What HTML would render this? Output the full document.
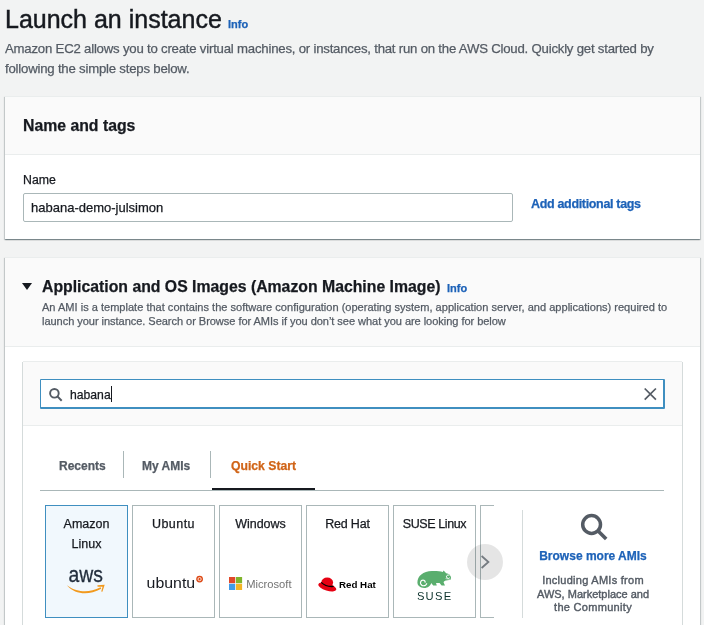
<!DOCTYPE html>
<html><head><meta charset="utf-8">
<style>
html,body{margin:0;padding:0;}
body{width:704px;height:625px;overflow:hidden;background:#f2f3f3;position:relative;font-family:"Liberation Sans",sans-serif;color:#16191f;}
.a{position:absolute;white-space:nowrap;}
svg.a{will-change:transform;}
.t{position:absolute;white-space:nowrap;line-height:20px;will-change:transform;-webkit-text-stroke:0.25px currentColor;}
.panel{position:absolute;left:5px;width:695px;background:#fff;box-shadow:0 1px 1px 0 rgba(0,28,36,.3),1px 1px 1px 0 rgba(0,28,36,.15),-1px 1px 1px 0 rgba(0,28,36,.15);border-top:1px solid #eaeded;}
.ph{position:absolute;left:0;right:0;top:0;background:#fafafa;border-bottom:1px solid #eaeded;}
.link{color:#1d62b8;font-weight:bold;}
.tile{position:absolute;top:505px;width:81px;height:111px;border:1px solid #aab7b8;background:#fff;}
.lbl{position:absolute;will-change:transform;left:0;right:0;text-align:center;font-size:12.5px;line-height:20px;color:#16191f;-webkit-text-stroke:0.25px currentColor;}
</style></head>
<body>
<!-- Title -->
<div class="t" style="left:5px;top:4.2px;font-size:25px;line-height:30px;-webkit-text-stroke:0.45px currentColor;">Launch an instance</div>
<div class="t link" style="left:228px;top:16px;font-size:11px;line-height:16px;">Info</div>
<div class="t" style="left:5px;top:39px;font-size:13.2px;letter-spacing:-0.21px;color:#545b64;">Amazon EC2 allows you to create virtual machines, or instances, that run on the AWS Cloud. Quickly get started by</div>
<div class="t" style="left:5px;top:59px;font-size:13.2px;letter-spacing:-0.21px;color:#545b64;">following the simple steps below.</div>

<!-- Panel 1 -->
<div class="panel" style="top:96px;height:142px;">
  <div class="ph" style="height:57px;"></div>
</div>
<div class="t" style="left:23px;top:116px;font-size:15.8px;font-weight:bold;">Name and tags</div>
<div class="t" style="left:23px;top:170px;font-size:12.3px;">Name</div>
<div class="a" style="left:23px;top:193px;width:488px;height:27px;border:1px solid #aab7b8;border-radius:2px;background:#fff;"></div>
<div class="t" style="left:31px;top:198px;font-size:13px;">habana-demo-julsimon</div>
<div class="t link" style="left:531px;top:193.5px;font-size:12.5px;letter-spacing:-0.33px;">Add additional tags</div>

<!-- Panel 2 -->
<div class="panel" style="top:257px;height:400px;">
  <div class="ph" style="height:88px;"></div>
</div>
<svg class="a" style="left:22px;top:283px;" width="11" height="8"><path d="M0 0H10L5 7Z" fill="#16191f"/></svg>
<div class="t" style="left:42px;top:277px;font-size:15.8px;font-weight:bold;">Application and OS Images (Amazon Machine Image)</div>
<div class="t link" style="left:447px;top:280px;font-size:11px;line-height:16px;">Info</div>
<div class="t" style="left:42px;top:300px;font-size:11.05px;line-height:14px;color:#545b64;">An AMI is a template that contains the software configuration (operating system, application server, and applications) required to</div>
<div class="t" style="left:42px;top:314px;font-size:11.05px;letter-spacing:-0.05px;line-height:14px;color:#545b64;">launch your instance. Search or Browse for AMIs if you don’t see what you are looking for below</div>

<!-- inner container -->
<div class="a" style="left:23px;top:361px;width:659px;height:1px;background:#eaeded;"></div>
<div class="a" style="left:22px;top:362px;width:1px;height:300px;background:#d5dbdb;"></div>
<div class="a" style="left:682px;top:362px;width:1px;height:300px;background:#d5dbdb;"></div>
<div class="a" style="left:23px;top:362px;width:659px;height:63px;background:#fafafa;border-bottom:1px solid #eaeded;"></div>
<!-- search -->
<div class="a" style="left:40px;top:379px;width:622px;height:27px;border:1px solid #3f8fc0;border-right-width:2px;border-bottom-width:2px;border-radius:1px;background:#fff;"></div>
<svg class="a" style="left:46px;top:385px;" width="20" height="20"><circle cx="8.4" cy="8.3" r="4.3" fill="none" stroke="#545b64" stroke-width="1.9"/><path d="M11.4 11.4 L15.7 15.7" stroke="#545b64" stroke-width="2"/></svg>
<div class="t" style="left:70px;top:385px;font-size:12.2px;">habana</div>
<div class="a" style="left:111px;top:386px;width:1px;height:16px;background:#16191f;"></div>
<svg class="a" style="left:642px;top:386px;" width="16" height="16"><path d="M2.7 2.5L13.9 13.7M13.9 2.5L2.7 13.7" stroke="#545b64" stroke-width="1.75"/></svg>

<!-- tabs -->
<div class="t" style="left:59px;top:456px;font-size:12px;font-weight:bold;color:#545b64;">Recents</div>
<div class="a" style="left:123px;top:451px;width:1px;height:27px;background:#aab7b8;"></div>
<div class="t" style="left:142px;top:456px;font-size:12px;font-weight:bold;color:#545b64;">My AMIs</div>
<div class="a" style="left:210px;top:451px;width:1px;height:27px;background:#aab7b8;"></div>
<div class="t" style="left:231px;top:456px;font-size:12.2px;font-weight:bold;color:#d06417;">Quick Start</div>
<div class="a" style="left:40px;top:490px;width:624px;height:1px;background:#aab7b8;"></div>
<div class="a" style="left:212px;top:488px;width:103px;height:2px;background:#16191f;"></div>

<!-- tiles -->
<div class="tile" style="left:45px;border-color:#3f8fc0;background:#f1f8fd;">
  <div class="lbl" style="top:8px;">Amazon</div>
  <div class="lbl" style="top:28px;">Linux</div>
</div>
<div class="tile" style="left:132px;"><div class="lbl" style="top:8px;letter-spacing:0.45px;">Ubuntu</div></div>
<div class="tile" style="left:219px;"><div class="lbl" style="top:8px;">Windows</div></div>
<div class="tile" style="left:306px;"><div class="lbl" style="top:8px;letter-spacing:-0.2px;">Red Hat</div></div>
<div class="tile" style="left:393px;"><div class="lbl" style="top:8px;letter-spacing:-0.4px;">SUSE Linux</div></div>
<div class="a" style="left:480px;top:505px;width:13px;height:111px;border:1px solid #aab7b8;border-right:none;background:#fff;"></div>
<div class="a" style="left:467px;top:544px;width:36px;height:36px;border-radius:50%;background:rgba(0,0,0,0.1);"></div>
<svg class="a" style="left:478px;top:554px;" width="14" height="16"><path d="M3.6 2L10.4 8L3.6 14" fill="none" stroke="#757b81" stroke-width="1.8"/></svg>


<!-- logos -->
<svg class="a" style="left:60px;top:560px;" width="50" height="36" viewBox="60 560 50 36">
  <text x="68.5" y="582.4" font-family="Liberation Sans" font-size="22.3" textLength="34.4" lengthAdjust="spacingAndGlyphs" fill="#232f3e" stroke="#232f3e" stroke-width="0.3">aws</text>
  <path d="M66.8 585.3 C73.5 590 79 591.3 85 591.3 C90 591.3 95 590 100.6 587.3 L101.3 588.7 C95.5 591.8 90 593.3 85 593.3 C78 593.3 72 591 66.8 585.3 Z" fill="#f29a1e"/>
  <path d="M97.4 585.2 L104.7 584.8 L102.4 591.8 L101.2 591.5 L102.6 586.8 L97.6 586.7 Z" fill="#f29a1e"/>
</svg>
<svg class="a" style="left:140px;top:570px;" width="70" height="24" viewBox="140 570 70 24">
  <text x="146.6" y="587.7" font-family="Liberation Sans" font-size="15.5" textLength="48.6" lengthAdjust="spacingAndGlyphs" fill="#16191f">ubuntu</text>
  <circle cx="199.6" cy="579.1" r="3.4" fill="#dd4814"/>
  <circle cx="199.6" cy="579.1" r="1.6" fill="none" stroke="#fff" stroke-width="0.8"/>
</svg>
<svg class="a" style="left:225px;top:572px;" width="72" height="22" viewBox="225 572 72 22">
  <rect x="229" y="577" width="6.2" height="6.2" fill="#e0482a"/>
  <rect x="235.9" y="577" width="6.2" height="6.2" fill="#7fb42a"/>
  <rect x="229" y="583.8" width="6.2" height="6.2" fill="#3f9be8"/>
  <rect x="235.9" y="583.8" width="6.2" height="6.2" fill="#f2b424"/>
  <text x="246.2" y="588" font-family="Liberation Sans" font-size="10.5" textLength="45.3" lengthAdjust="spacingAndGlyphs" fill="#737373">Microsoft</text>
</svg>
<svg class="a" style="left:312px;top:572px;" width="70" height="24" viewBox="312 572 70 24">
  <ellipse cx="327.2" cy="582.6" rx="5.9" ry="5" fill="#e60012"/>
  <ellipse cx="327.3" cy="587" rx="9.4" ry="3.6" transform="rotate(17 327.3 587)" fill="#e60012"/>
  <path d="M321.2 582.4 C324 585.2 329 586.8 333.6 586.4" fill="none" stroke="#000" stroke-width="1.3"/>
  <text x="339" y="587.9" font-family="Liberation Sans" font-weight="bold" font-size="9.6" textLength="36.8" lengthAdjust="spacingAndGlyphs" fill="#000">Red Hat</text>
</svg>
<svg class="a" style="left:412px;top:566px;" width="44" height="38" viewBox="412 566 44 38">
  <path d="M417.4 582.5 C417.4 576 423 571.2 432 571 C437 570.9 440.5 571.3 442.8 572 L443.6 570.6 L446.2 573.2 C449 573.6 451 575.5 451 577.6 L450.8 579.8 L446 580.6 C444.6 580.9 443.8 581.6 443.6 582.4 L445 585.4 L441.6 585.4 L439.6 582.9 L436 582.9 L436.8 585.4 L433.2 585.4 L431.2 582.9 C430.5 585.6 428 587.9 424.2 587.9 C420.2 587.9 417.4 585.6 417.4 582.5 Z" fill="#5aae6e"/>
  <path d="M425.17 582.17 L425.14 581.86 L425.06 581.55 L424.92 581.26 L424.73 580.98 L424.50 580.73 L424.22 580.52 L423.91 580.35 L423.56 580.24 L423.20 580.18 L422.82 580.18 L422.44 580.24 L422.07 580.36 L421.71 580.55 L421.39 580.80 L421.10 581.10 L420.86 581.45 L420.68 581.84 L420.56 582.26 L420.51 582.70 L420.53 583.16 L420.63 583.61 L420.80 584.04 L421.04 584.45 L421.35 584.82 L421.72 585.15 L422.15 585.41 L422.61 585.60 L423.11 585.72 L423.63 585.75 L424.16 585.70 L424.68 585.57 L425.17 585.35 L425.64 585.05 L426.05 584.67 L426.40 584.23 L426.68 583.73" fill="none" stroke="#fff" stroke-width="1.2" stroke-linecap="round"/>
  <path d="M449.3 575.4 A1.7 1.7 0 1 0 449.6 577.6" fill="none" stroke="#fff" stroke-width="0.95"/>
  <path d="M445.6 578.6 L450.6 579.3" stroke="#fff" stroke-width="0.6"/>
  <text x="416.9" y="600.4" font-family="Liberation Sans" font-size="11.2" textLength="34.2" lengthAdjust="spacing" fill="#0c322c">SUSE</text>
</svg>
<!-- browse -->
<div class="a" style="left:522px;top:510px;width:1px;height:108px;background:#d5dbdb;"></div>
<svg class="a" style="left:578px;top:512px;" width="32" height="32"><circle cx="13.6" cy="12.5" r="8.9" fill="none" stroke="#545b64" stroke-width="3.5"/><path d="M19.6 18.4L28.2 27" stroke="#545b64" stroke-width="3.6"/></svg>
<div class="t link" style="left:523px;width:140px;text-align:center;top:546px;font-size:12px;">Browse more AMIs</div>
<div class="t" style="left:523px;width:140px;text-align:center;top:574px;font-size:11px;line-height:13.5px;color:#545b64;-webkit-text-stroke:0.4px currentColor;letter-spacing:0.27px;">Including AMIs from</div>
<div class="t" style="left:523px;width:140px;text-align:center;top:587.5px;font-size:11px;line-height:13.5px;color:#545b64;-webkit-text-stroke:0.4px currentColor;">AWS, Marketplace and</div>
<div class="t" style="left:523px;width:140px;text-align:center;top:601px;font-size:11px;line-height:13.5px;color:#545b64;-webkit-text-stroke:0.4px currentColor;letter-spacing:0.3px;">the Community</div>
</body></html>
